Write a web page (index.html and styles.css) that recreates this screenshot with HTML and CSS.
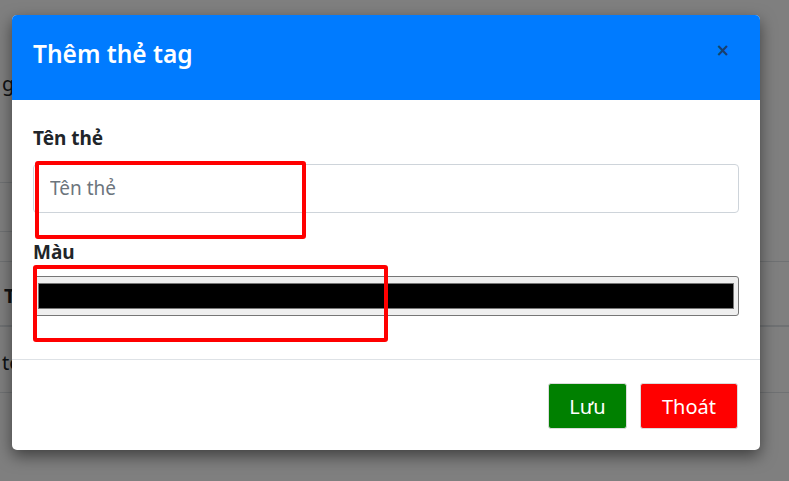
FILE: index.html
```html
<!DOCTYPE html>
<html lang="vi">
<head>
<meta charset="utf-8">
<title>Thêm thẻ tag</title>
<link rel="stylesheet" href="styles.css">
</head>
<body>
<div class="page">
  <div class="row row-top"><span class="bg-text">g</span></div>
  <div class="row row-a"><span class="seg"></span></div>
  <div class="row row-b"><span class="seg"></span></div>
  <div class="row row-c"></div>
  <div class="row row-d"><span class="bg-text bold">T</span></div>
  <div class="row row-e"><span class="bg-text">te</span></div>
</div>
<div class="backdrop"></div>
<div class="modal">
  <div class="modal-header">
    <h5 class="modal-title">Thêm thẻ tag</h5>
    <button class="close" type="button">×</button>
  </div>
  <div class="modal-body">
    <label class="label">Tên thẻ</label>
    <div class="field">
      <input class="text-input" type="text" placeholder="Tên thẻ">
      <div class="mark mark-1"></div>
    </div>
    <label class="label label-color">Màu</label>
    <div class="field">
      <div class="color-input"><div class="swatch"></div></div>
      <div class="mark mark-2"></div>
    </div>
  </div>
  <div class="modal-footer">
    <button class="btn btn-save" type="button">Lưu</button>
    <button class="btn btn-exit" type="button">Thoát</button>
  </div>
</div>
</body>
</html>
```
FILE: styles.css
```css
* { box-sizing: border-box; }
html, body { margin: 0; padding: 0; }
body {
  width: 789px;
  height: 481px;
  overflow: hidden;
  font-family: "Noto Sans", "Open Sans", sans-serif;
  background: #fff;
  color: #212529;
  position: relative;
}
.page { width: 789px; }
.row {
  border-bottom: 1px solid #dee2e6;
  display: flex;
  align-items: center;
  font-size: 20px;
}
.row-top { height: 100px; border-bottom: none; align-items: flex-end; padding-bottom: 6px; }
.row-a { height: 83px; border-bottom: none; align-items: flex-end; }
.row-b { height: 49px; border-bottom: none; align-items: flex-end; }
.seg { display: block; width: 300px; border-bottom: 1px solid #dee2e6; }
.row-c { height: 30px; }
.row-d { height: 65px; border-bottom: 2px solid #dee2e6; padding-top: 5px; }
.row-e { height: 66px; align-items: flex-start; padding-top: 26px; }
.bg-text { display: block; margin-left: 2px; line-height: 1; }
.bg-text.bold { font-weight: 700; margin-left: 4px; }

.backdrop {
  position: absolute;
  inset: 0;
  background: rgba(0, 0, 0, 0.5);
}
.modal {
  position: absolute;
  left: 12px;
  top: 15px;
  width: 748px;
  height: 435px;
  background: #fff;
  border-radius: 5px;
  box-shadow: 0 6px 16px rgba(0, 0, 0, 0.5);
  display: flex;
  flex-direction: column;
  overflow: hidden;
}
.modal-header {
  height: 85px;
  background: #007bff;
  display: flex;
  align-items: center;
  justify-content: space-between;
  padding: 0 30px 8px 21px;
}
.modal-title {
  margin: 0;
  color: #fff;
  font-size: 24.5px;
  font-weight: 600;
  line-height: 1.2;
}
.close {
  border: none;
  background: none;
  padding: 0 0 6px 0;
  color: #1a3f6e;
  font-size: 17px;
  font-weight: 700;
  line-height: 1;
  font-family: "DejaVu Sans", sans-serif;
}
.modal-body {
  flex: 1;
  padding: 24px 21px 0 21px;
  border-bottom: 1px solid #dee2e6;
}
.label {
  display: block;
  font-size: 19px;
  font-weight: 700;
  line-height: 1.5;
  margin-bottom: 11px;
}
.label-color { margin-top: 25px; margin-bottom: 10px; }
.field { position: relative; }
.text-input {
  display: block;
  width: 100%;
  height: 49px;
  border: 1px solid #ced4da;
  border-radius: 4px;
  padding: 0 16px;
  font-family: inherit;
  font-size: 19px;
  color: #495057;
  background: #fff;
}
.text-input::placeholder { color: #6c757d; }
.color-input {
  height: 40px;
  border: 1px solid #767676;
  border-radius: 3px;
  background: #efefef;
  padding: 6px 4px;
}
.swatch {
  height: 100%;
  background: #000;
  border: 1px solid #777;
}
.mark {
  position: absolute;
  border: 4px solid #ff0000;
  border-radius: 3px;
}
.mark-1 { left: 2px; top: -3px; width: 271px; height: 78px; }
.mark-2 { left: 0; top: -11px; width: 355px; height: 77px; }
.modal-footer {
  height: 90px;
  display: flex;
  justify-content: flex-end;
  align-items: center;
  gap: 13px;
  padding: 2px 22px 0 0;
}
.btn {
  height: 46px;
  border: 1px solid #dcdcdc;
  border-radius: 3px;
  color: #fff;
  font-family: inherit;
  font-size: 20px;
  padding: 0;
}
.btn-save { width: 79px; background: #008000; }
.btn-exit { width: 98px; background: #ff0000; }
```
